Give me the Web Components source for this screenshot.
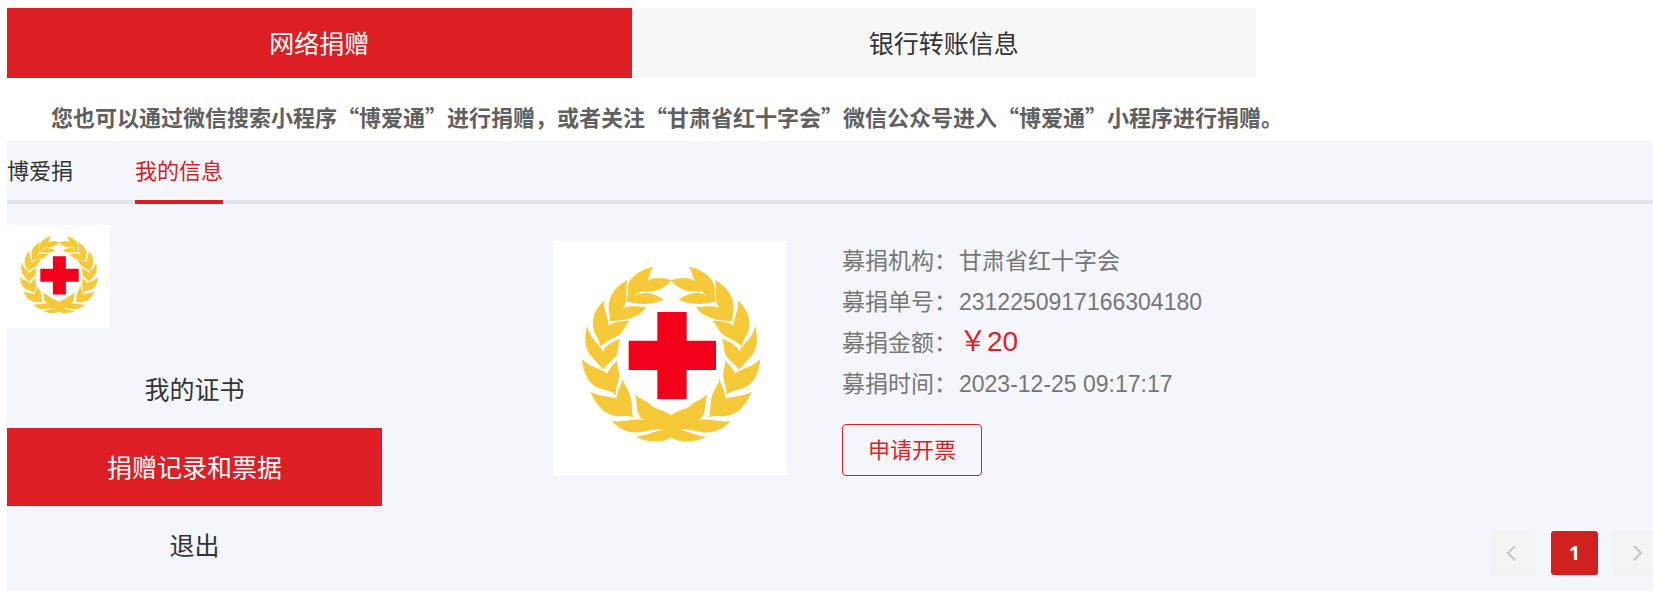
<!DOCTYPE html>
<html lang="zh-CN">
<head>
<meta charset="utf-8">
<meta name="viewport" content="width=device-width, initial-scale=1">
<title>网络捐赠</title>
<style>
html { overflow-x: hidden; }
body { margin: 0; color: #333; font: 22px/30px "Liberation Sans", "Noto Sans CJK SC", sans-serif; }
</style>
</head>
<body>
<donation-page></donation-page>

<template id="page-template">
<style>
:host { display: flex; flex-direction: column; min-height: 100vh; padding: 8px 0 0 7px; box-sizing: border-box; }
main { display: flex; flex-direction: column; flex: 1; width: 100vw; background: #f4f6fb; }
.notice { margin: 23px 0 10px; text-indent: 44px; font-family: "Noto Sans CJK SC", sans-serif; font-size: 22px; line-height: 30px; font-weight: bold; color: #606060; }
.body { display: flex; align-items: flex-start; padding-top: 21px; }
side-menu { flex: 0 0 375px; }
.content { flex: 1; min-width: 0; padding: 16px 0 16px 171px; }
page-nav { margin-top: 55px; }
.avatar { width: 103px; }
</style>
<channel-tabs></channel-tabs>
<p class="notice">您也可以通过微信搜索小程序“博爱通”进行捐赠，或者关注“甘肃省红十字会”微信公众号进入“博爱通”小程序进行捐赠。</p>
<main>
  <section-nav></section-nav>
  <div class="body">
    <side-menu><red-cross-logo class="avatar" slot="avatar"></red-cross-logo></side-menu>
    <div class="content">
      <donation-record>
        <span slot="org">甘肃省红十字会</span>
        <span slot="number">2312250917166304180</span>
        <span slot="amount">￥20</span>
        <span slot="time">2023-12-25 09:17:17</span>
      </donation-record>
      <page-nav></page-nav>
    </div>
  </div>
</main>
</template>

<template id="tabs-template">
<style>
:host { display: flex; max-width: 1249px; }
button { flex: 1; height: 70px; border: 0; padding: 2px 0 0; background: #f7f7f7; color: #333; font: inherit; font-size: 25px; line-height: 68px; cursor: pointer; }
button[aria-selected="true"] { background: #dd1f25; color: #fff; }
</style>
<button type="button" role="tab" aria-selected="true">网络捐赠</button>
<button type="button" role="tab" aria-selected="false">银行转账信息</button>
</template>

<template id="section-nav-template">
<style>
:host { display: block; }
nav { display: flex; gap: 62px; box-shadow: inset 0 -4px #dfe4ed; }
a { color: #333; text-decoration: none; padding-top: 2px; line-height: 57px; border-bottom: 4px solid transparent; }
a[aria-current] { color: #d31f24; border-color: #d4201f; }
</style>
<nav><a href="#donate">博爱捐</a><a href="#mine" aria-current="page">我的信息</a></nav>
</template>

<template id="side-menu-template">
<style>
:host { display: block; }
nav { display: flex; flex-direction: column; margin-top: 22px; }
a { padding-top: 2px; line-height: 76px; font-size: 25px; text-align: center; color: #333; text-decoration: none; }
a[aria-current] { background: #dd1f25; color: #fff; }
</style>
<slot name="avatar"></slot>
<nav><a href="#certificates">我的证书</a><a href="#records" aria-current="page">捐赠记录和票据</a><a href="#logout">退出</a></nav>
</template>

<template id="record-template">
<style>
:host { display: flex; gap: 55px; align-items: flex-start; }
red-cross-logo { width: 234px; }
dl { display: grid; grid-template-columns: 117px auto; grid-auto-rows: 41px; margin: 0; color: #767676; font-size: 23px; line-height: 41px; }
dd { margin: 0; white-space: nowrap; }
dt { white-space: nowrap; }
.amount { color: #dd1f25; font-size: 28px; line-height: 38px; }
button { width: 140px; height: 52px; margin-top: 19px; padding: 2px 0 0; border: 1px solid #dd1f25; border-radius: 4px; background: transparent; color: #dd1f25; font: inherit; font-size: 22px; cursor: pointer; }
</style>
<red-cross-logo></red-cross-logo>
<div>
  <dl>
    <dt>募捐机构：</dt><dd><slot name="org"></slot></dd>
    <dt>募捐单号：</dt><dd><slot name="number"></slot></dd>
    <dt>募捐金额：</dt><dd class="amount"><slot name="amount"></slot></dd>
    <dt>募捐时间：</dt><dd><slot name="time"></slot></dd>
  </dl>
  <button type="button">申请开票</button>
</div>
</template>

<template id="page-nav-template">
<style>
:host { display: flex; justify-content: flex-end; gap: 15px; }
button { display: flex; align-items: center; justify-content: center; width: 47px; height: 44px; padding: 0; border: 0; border-radius: 3px; background: #f4f4f5; font: inherit; font-size: 20px; font-weight: bold; }
button[aria-current] { background: #d0211f; color: #fff; font-family: "Open Sans", sans-serif; }
svg { width: 12px; height: 18px; fill: none; stroke: #c0c4cc; stroke-width: 2; }
</style>
<button type="button" disabled aria-label="上一页"><svg viewBox="0 0 12 18"><path d="M8 2 1 9l7 7"/></svg></button>
<button type="button" aria-current="page">1</button>
<button type="button" disabled aria-label="下一页"><svg viewBox="0 0 12 18"><path d="m3 2 7 7-7 7"/></svg></button>
</template>

<template id="logo-template">
<style>
:host { display: block; aspect-ratio: 1; background: #fff; }
svg { display: block; width: 100%; height: 100%; }
</style>
<svg viewBox="39 33 702 702" role="img" aria-label="红十字会">
  <g id="branch" fill="#f5c937">
    <path d="M341 110C307 115 271 139 264 165C260 181 266 194 259 213L281 200C299 188 315 174 323 153C329 137 331 124 341 110Z"/>
    <path d="M395 151C365 140 332 141 318 157C314 169 307 176 301 184C339 190 371 179 395 151Z"/>
    <path d="M371 209C344 188 309 183 284 197L257 214C286 223 331 227 371 209Z"/>
    <path d="M263 149C229 168 206 195 206 231C205 250 212 257 210 275C227 260 242 242 254 228C265 201 253 176 263 149Z"/>
    <path d="M320 232C285 227 252 225 232 241L209 273C249 273 291 268 320 232Z"/>
    <path d="M193 211C169 232 155 261 160 293C163 316 178 324 181 349L206 297C211 272 188 240 193 211Z"/>
    <path d="M270 272C235 272 206 277 192 303C186 323 186 335 181 350C197 333 220 326 237 315C251 303 256 285 270 272Z"/>
    <path d="M142 286C133 318 133 353 151 376L190 419C192 404 197 387 190 369C181 338 149 332 142 286Z"/>
    <path d="M242 325C219 338 193 344 187 370C185 389 193 401 190 420C203 399 224 390 231 373C237 355 233 342 242 325Z"/>
    <path d="M126 387C131 431 146 463 176 474C195 481 211 481 228 495C222 474 222 451 207 435C185 414 151 414 126 387Z"/>
    <path d="M232 390C219 409 199 420 200 444C201 466 217 475 227 495C226 477 235 461 237 441C239 421 231 412 232 390Z"/>
    <path d="M151 485C170 527 192 552 229 558C248 561 260 554 281 562C265 546 260 526 246 514C217 495 185 503 151 485Z"/>
    <path d="M248 447C243 473 223 492 232 520C240 542 265 546 279 561C275 547 277 528 273 506C267 479 256 472 248 447Z"/>
    <path d="M215 573C241 600 271 612 304 606C330 602 350 594 397 602V588C362 583 336 573 302 569C272 566 248 578 215 573Z"/>
    <path d="M285 492C293 523 287 548 305 566C327 582 353 583 376 594C357 573 350 559 341 536C330 513 304 512 285 492Z"/>
    <path d="M287 621C327 638 371 640 394 622L397 594C359 595 324 617 287 621Z"/>
    <path d="M335 527C341 551 343 570 361 584L397 600V560C379 540 358 542 335 527Z"/>
  </g>
  <use href="#branch" transform="matrix(-1 0 0 1 787 0)"/>
  <path d="M352 246h88v86h88v88h-88v87h-88v-87h-86v-88h86z" fill="#f3001b"/>
</svg>
</template>

<script>
function define(name, templateId) {
  customElements.define(name, class extends HTMLElement {
    constructor() {
      super();
      const template = document.getElementById(templateId);
      this.attachShadow({ mode: "open" }).append(template.content.cloneNode(true));
    }
  });
}
define("red-cross-logo", "logo-template");
define("channel-tabs", "tabs-template");
define("section-nav", "section-nav-template");
define("side-menu", "side-menu-template");
define("donation-record", "record-template");
define("page-nav", "page-nav-template");
define("donation-page", "page-template");
</script>
</body>
</html>
